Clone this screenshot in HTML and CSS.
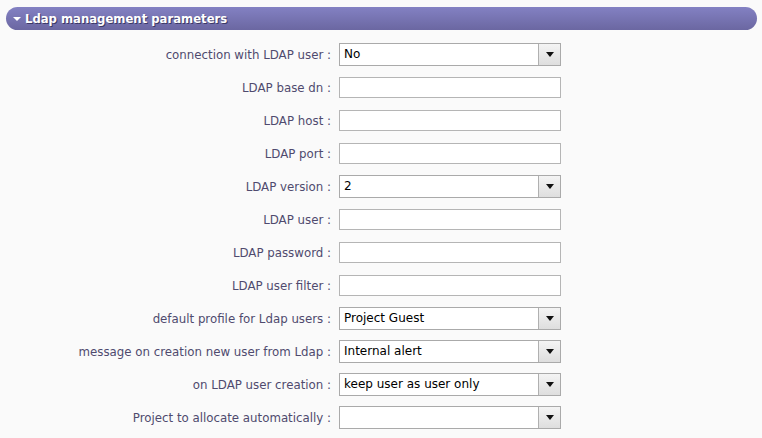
FILE: index.html
```html
<!DOCTYPE html>
<html>
<head>
<meta charset="utf-8">
<link rel="stylesheet" href="styles.css">
</head>
<body>
<div class="section">
  <div class="header"><span class="tri"></span><span class="title">Ldap management parameters</span></div>
  <div class="form">
    <label class="lbl">connection with LDAP user :</label><div class="sel"><span class="val">No</span><span class="btn"><span class="arr"></span></span></div>
    <label class="lbl">LDAP base dn :</label><div class="inp"></div>
    <label class="lbl">LDAP host :</label><div class="inp"></div>
    <label class="lbl">LDAP port :</label><div class="inp"></div>
    <label class="lbl">LDAP version :</label><div class="sel"><span class="val">2</span><span class="btn"><span class="arr"></span></span></div>
    <label class="lbl">LDAP user :</label><div class="inp"></div>
    <label class="lbl">LDAP password :</label><div class="inp"></div>
    <label class="lbl">LDAP user filter :</label><div class="inp"></div>
    <label class="lbl">default profile for Ldap users :</label><div class="sel"><span class="val">Project Guest</span><span class="btn"><span class="arr"></span></span></div>
    <label class="lbl">message on creation new user from Ldap :</label><div class="sel"><span class="val">Internal alert</span><span class="btn"><span class="arr"></span></span></div>
    <label class="lbl">on LDAP user creation :</label><div class="sel"><span class="val">keep user as user only</span><span class="btn"><span class="arr"></span></span></div>
    <label class="lbl">Project to allocate automatically :</label><div class="sel"><span class="val"></span><span class="btn"><span class="arr"></span></span></div>
  </div>
</div>
</body>
</html>
```
FILE: styles.css
```css
html, body {
  margin: 0;
  padding: 0;
  background: #fafafa;
}
body {
  font-family: "DejaVu Sans", Verdana, sans-serif;
  font-size: 11px;
}
.section {
  padding: 7px 5px 0 6px;
}
.header {
  height: 23px;
  border-radius: 12px;
  background: linear-gradient(#8381c3, #6b67a1);
  display: flex;
  align-items: center;
  padding-left: 7px;
  color: #fff;
}
.tri {
  width: 0;
  height: 0;
  border-left: 4px solid transparent;
  border-right: 4px solid transparent;
  border-top: 4px solid #fff;
  margin-right: 4px;
  margin-top: 1px;
}
.title {
  font-weight: bold;
  font-size: 11.65px;
  text-shadow: 1px 1px 0 #3b3866;
}
.form {
  display: grid;
  grid-template-columns: 325px 222px;
  column-gap: 8px;
  row-gap: 10px;
  margin-top: 13px;
  align-items: center;
}
.lbl {
  text-align: right;
  color: #4f4a6e;
  font-size: 11.8px;
}
.inp {
  border: 1px solid #b5b5b5;
  background: #fff;
  box-sizing: border-box;
  height: 21px;
  margin: 1px 0;
}
.sel {
  height: 23px;
  box-sizing: border-box;
  border: 1px solid #aaa;
  background: #fff;
  display: flex;
  color: #000;
}
.val {
  flex: 1;
  padding-left: 4px;
  line-height: 21px;
  font-size: 12px;
}
.btn {
  width: 21px;
  border-left: 1px solid #b0b0b0;
  background: linear-gradient(#f4f4f4, #dedede);
  display: flex;
  align-items: center;
  justify-content: center;
}
.arr {
  width: 0;
  height: 0;
  border-left: 4px solid transparent;
  border-right: 4px solid transparent;
  border-top: 5px solid #111;
}
```
